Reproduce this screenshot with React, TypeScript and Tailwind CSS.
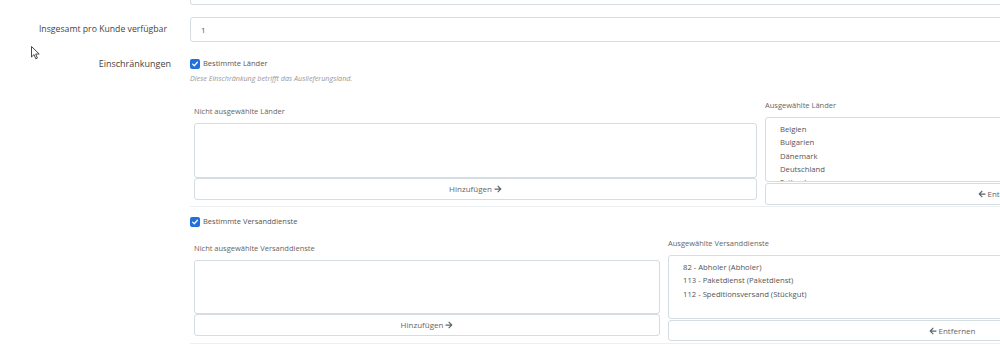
import React from "react";
import { FaArrowRight, FaArrowLeft } from "react-icons/fa";

function Check({ label }: { label: string }) {
  return (
    <div className="flex h-[12px] items-center">
      <div className="flex h-[10px] w-[10px] items-center justify-center rounded-[2px] bg-[#2370dc]">
        <svg viewBox="0 0 10 10" className="h-[8px] w-[8px]">
          <path d="M2 5.2 L4.1 7.2 L8 2.8" fill="none" stroke="#fff" strokeWidth="1.5" strokeLinecap="round" strokeLinejoin="round" />
        </svg>
      </div>
      <span className="ml-[3px] text-[7.5px] text-[#555]">{label}</span>
    </div>
  );
}

function ListCol({
  label,
  width,
  boxH,
  gap,
  btnH,
  items,
  add,
}: {
  label: string;
  width: number;
  boxH: string;
  gap: string;
  btnH: string;
  items: string[];
  add: boolean;
}) {
  return (
    <div className="flex flex-col shrink-0" style={{ width }}>
      <div className="flex h-[12px] items-center text-[7.5px] text-[#666]">{label}</div>
      <div className={`mt-[5px] overflow-hidden rounded-[3px] border border-[#d3dde2] bg-white pl-[14px] pt-[5px] ${boxH}`}>
        {items.map((it) => (
          <div key={it} className="text-[7.7px] leading-[13.33px] text-[#555]">
            {it}
          </div>
        ))}
      </div>
      <div className={`${gap} flex items-center justify-center rounded-[3px] border border-[#d3dde2] bg-white text-[8px] text-[#666] ${btnH}`}>
        {add ? (
          <>
            <span>Hinzufügen</span>
            <FaArrowRight className="ml-[2px] h-[8px] w-[8px] text-[#5a666e]" />
          </>
        ) : (
          <>
            <FaArrowLeft className="mr-[2px] h-[8px] w-[8px] text-[#5a666e]" />
            <span>Entfernen</span>
          </>
        )}
      </div>
    </div>
  );
}

export default function App() {
  return (
    <div
      className="relative h-[351px] w-[1000px] overflow-hidden bg-white"
      style={{ fontFamily: '"Open Sans", "Noto Sans", sans-serif' }}
    >
      <div className="flex w-[1240px] flex-col">
        {/* previous input bottom */}
        <div className="flex">
          <div className="w-[190px] shrink-0" />
          <div className="h-[5px] flex-1 rounded-b-[3px] border-x border-b border-[#d3dde2]" />
        </div>

        {/* Insgesamt row */}
        <div className="mt-[12px] flex items-center">
          <div className="w-[167px] shrink-0 text-right text-[8.7px] text-[#444]">Insgesamt pro Kunde verfügbar</div>
          <div className="ml-[23px] flex h-[25px] flex-1 items-center rounded-[3px] border border-[#d3dde2] pl-[10px] text-[8px] text-[#555]">
            1
          </div>
        </div>

        {/* Einschränkungen */}
        <div className="mt-[16px] flex">
          <div className="flex h-[12px] w-[171px] shrink-0 items-center justify-end text-[9px] text-[#444]">
            Einschränkungen
          </div>
          <div className="ml-[19px] flex flex-1 flex-col">
            <Check label="Bestimmte Länder" />
            <div className="mt-[2px] flex h-[12px] items-center text-[7.2px] italic text-[#999]">
              Diese Einschränkung betrifft das Auslieferungsland.
            </div>

            <div className="mt-[16px] flex items-center pl-[4px]">
              <ListCol
                label="Nicht ausgewählte Länder"
                width={563}
                boxH="h-[55px]"
                gap="mt-0"
                btnH="h-[22px]"
                items={[]}
                add
              />
              <div className="ml-[8px]">
                <ListCol
                  label="Ausgewählte Länder"
                  width={472}
                  boxH="h-[65px]"
                  gap="mt-[1px]"
                  btnH="h-[22px]"
                  items={["Belgien", "Bulgarien", "Dänemark", "Deutschland", "Estland"]}
                  add={false}
                />
              </div>
            </div>
            <div className="mt-[1px] border-t border-[#eceff1]" />

            <div className="mt-[9px]">
              <Check label="Bestimmte Versanddienste" />
            </div>

            <div className="mt-[10px] flex items-center pl-[4px]">
              <ListCol
                label="Nicht ausgewählte Versanddienste"
                width={466}
                boxH="h-[54px]"
                gap="mt-0"
                btnH="h-[22px]"
                items={[]}
                add
              />
              <div className="ml-[8px]">
                <ListCol
                  label="Ausgewählte Versanddienste"
                  width={568}
                  boxH="h-[64px]"
                  gap="mt-[1px]"
                  btnH="h-[21px]"
                  items={["82 - Abholer (Abholer)", "113 - Paketdienst (Paketdienst)", "112 - Speditionsversand (Stückgut)"]}
                  add={false}
                />
              </div>
            </div>
            <div className="mt-[2px] border-t border-[#eceff1]" />
          </div>
        </div>
      </div>

      {/* mouse cursor */}
      <svg className="absolute left-[31px] top-[46px]" width="10" height="14" viewBox="0 0 10 14">
        <path d="M0.5 0.5 L0.5 11 L3 8.6 L4.8 12.8 L6.4 12.1 L4.7 8 L8.2 8 Z" fill="#fff" stroke="#333" strokeWidth="0.9" strokeLinejoin="round" />
      </svg>
    </div>
  );
}
